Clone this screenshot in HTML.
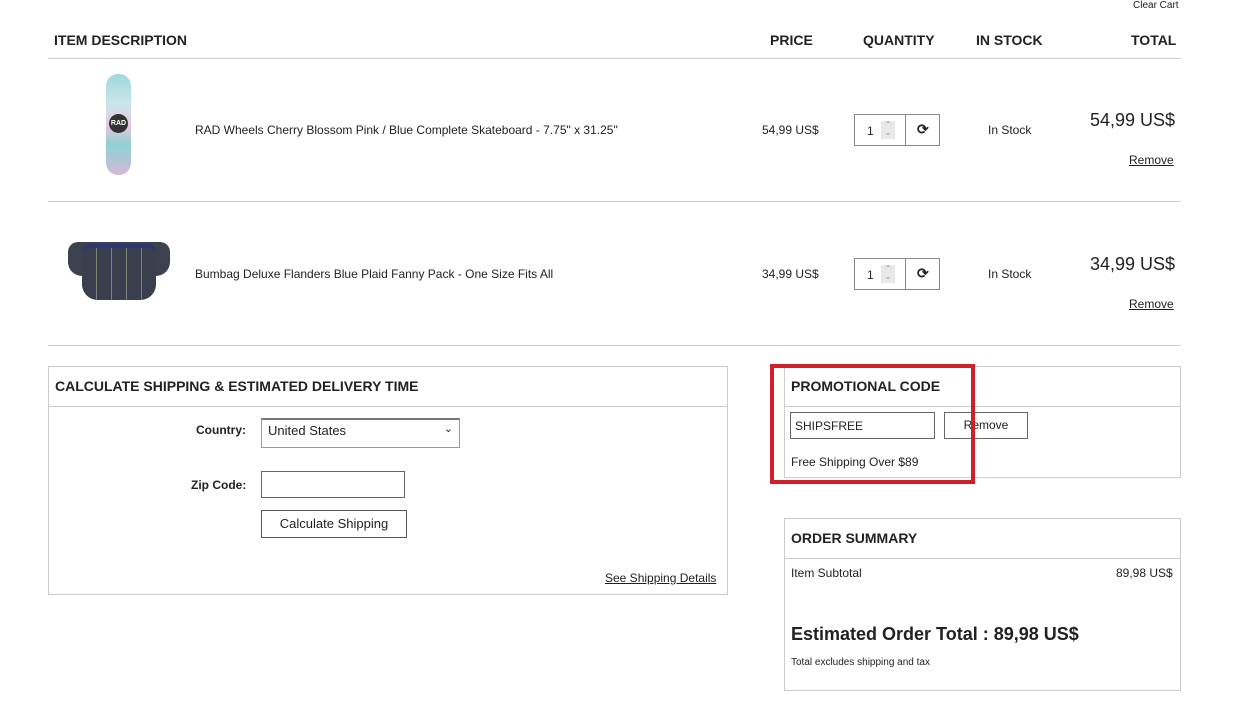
<!DOCTYPE html>
<html><head><style>
*{margin:0;padding:0;box-sizing:border-box}
body{width:1238px;height:701px;background:#fff;font-family:"Liberation Sans",Arial,sans-serif;color:#222;position:relative;overflow:hidden}
.a{position:absolute;white-space:nowrap}
.h{font-size:14px;font-weight:bold;top:32px}
.line{position:absolute;left:48px;width:1133px;height:1px;background:#ccc}
.s{font-size:12px}
.qty{position:absolute;width:86px;height:32px;border:1px solid #888}
.qty .n{position:absolute;left:12px;top:9px;font-size:12px}
.qty .sp{position:absolute;left:26px;top:6px;width:14px;height:18px;background:#e8e8e8;font-size:8px;color:#999;text-align:center;line-height:8px}
.qty .d{position:absolute;left:50px;top:0;width:1px;height:30px;background:#888}
.qty .r{position:absolute;left:62px;top:6px;font-size:14px;font-weight:bold}
.box{position:absolute;border:1px solid #ccc}
.bh{position:absolute;left:0;right:0;height:40px;border-bottom:1px solid #ccc;font-weight:bold;font-size:14px;padding:11px 6px}
u{text-decoration:underline}
</style></head><body>
<div class="a" style="left:1133px;top:0;font-size:10px">Clear Cart</div>
<div class="a h" style="left:54px">ITEM DESCRIPTION</div>
<div class="a h" style="left:770px">PRICE</div>
<div class="a h" style="left:863px">QUANTITY</div>
<div class="a h" style="left:976px">IN STOCK</div>
<div class="a h" style="left:1131px">TOTAL</div>
<div class="line" style="top:58px"></div>
<div class="line" style="top:201px"></div>
<div class="line" style="top:345px"></div>

<div class="a" style="left:106px;top:74px;width:25px;height:101px;border-radius:12px;background:linear-gradient(#9fd8dc,#c9e6ea 30%,#e8c7e0 50%,#8fd0d4 70%,#d6b9d8)"></div>
<div class="a" style="left:109px;top:114px;width:19px;height:19px;border-radius:50%;background:#333;color:#fff;font-size:7px;font-weight:bold;text-align:center;line-height:19px">RAD</div>
<div class="a" style="left:68px;top:242px;width:102px;height:34px;border-radius:10px 10px 14px 14px;background:#3c4150"></div>
<div class="a" style="left:82px;top:244px;width:74px;height:56px;border-radius:8px 8px 16px 16px;background:repeating-linear-gradient(90deg,#3a3f4d 0 14px,#7d8178 14px 15px),#3a3f4d;border-top:4px solid #2c3670"></div>

<div class="a s" style="left:195px;top:123px">RAD Wheels Cherry Blossom Pink / Blue Complete Skateboard - 7.75" x 31.25"</div>
<div class="a s" style="left:762px;top:123px">54,99 US$</div>
<div class="qty" style="left:854px;top:114px"><span class="n">1</span><span class="sp">⌃<br>⌄</span><span class="d"></span><span class="r">⟳</span></div>
<div class="a s" style="left:988px;top:123px">In Stock</div>
<div class="a" style="left:1090px;top:110px;font-size:18px">54,99 US$</div>
<div class="a s" style="left:1129px;top:153px"><u>Remove</u></div>

<div class="a s" style="left:195px;top:267px">Bumbag Deluxe Flanders Blue Plaid Fanny Pack - One Size Fits All</div>
<div class="a s" style="left:762px;top:267px">34,99 US$</div>
<div class="qty" style="left:854px;top:258px"><span class="n">1</span><span class="sp">⌃<br>⌄</span><span class="d"></span><span class="r">⟳</span></div>
<div class="a s" style="left:988px;top:267px">In Stock</div>
<div class="a" style="left:1090px;top:254px;font-size:18px">34,99 US$</div>
<div class="a s" style="left:1129px;top:297px"><u>Remove</u></div>

<div class="box" style="left:48px;top:366px;width:680px;height:229px">
 <div class="bh" style="top:0">CALCULATE SHIPPING &amp; ESTIMATED DELIVERY TIME</div>
</div>
<div class="a s" style="left:196px;top:423px;font-weight:bold">Country:</div>
<div class="a" style="left:261px;top:418px;width:199px;height:30px;border:1px solid #999;border-top:2px solid #777;font-size:13px;padding:3px 6px">United States<span style="position:absolute;right:6px;top:2px;font-size:11px">⌄</span></div>
<div class="a s" style="left:191px;top:478px;font-weight:bold">Zip Code:</div>
<div class="a" style="left:261px;top:471px;width:144px;height:27px;border:1px solid #666"></div>
<div class="a" style="left:261px;top:510px;width:146px;height:28px;border:1px solid #555;font-size:13px;text-align:center;line-height:26px">Calculate Shipping</div>
<div class="a s" style="left:605px;top:571px"><u>See Shipping Details</u></div>

<div class="box" style="left:784px;top:366px;width:397px;height:112px">
 <div class="bh" style="top:0">PROMOTIONAL CODE</div>
</div>
<div class="a" style="left:790px;top:412px;width:145px;height:27px;border:1px solid #666;font-size:12px;padding:6px 4px">SHIPSFREE</div>
<div class="a" style="left:944px;top:412px;width:84px;height:27px;border:1px solid #666;font-size:12px;text-align:center;line-height:25px">Remove</div>
<div class="a s" style="left:791px;top:455px">Free Shipping Over $89</div>
<div class="a" style="left:770px;top:364px;width:205px;height:120px;border:4px solid #d0202a"></div>

<div class="box" style="left:784px;top:518px;width:397px;height:173px">
 <div class="bh" style="top:0">ORDER SUMMARY</div>
</div>
<div class="a s" style="left:791px;top:566px">Item Subtotal</div>
<div class="a s" style="left:1116px;top:566px">89,98 US$</div>
<div class="a" style="left:791px;top:624px;font-size:18px;font-weight:bold">Estimated Order Total : 89,98 US$</div>
<div class="a" style="left:791px;top:657px;font-size:10px">Total excludes shipping and tax</div>
</body></html>
